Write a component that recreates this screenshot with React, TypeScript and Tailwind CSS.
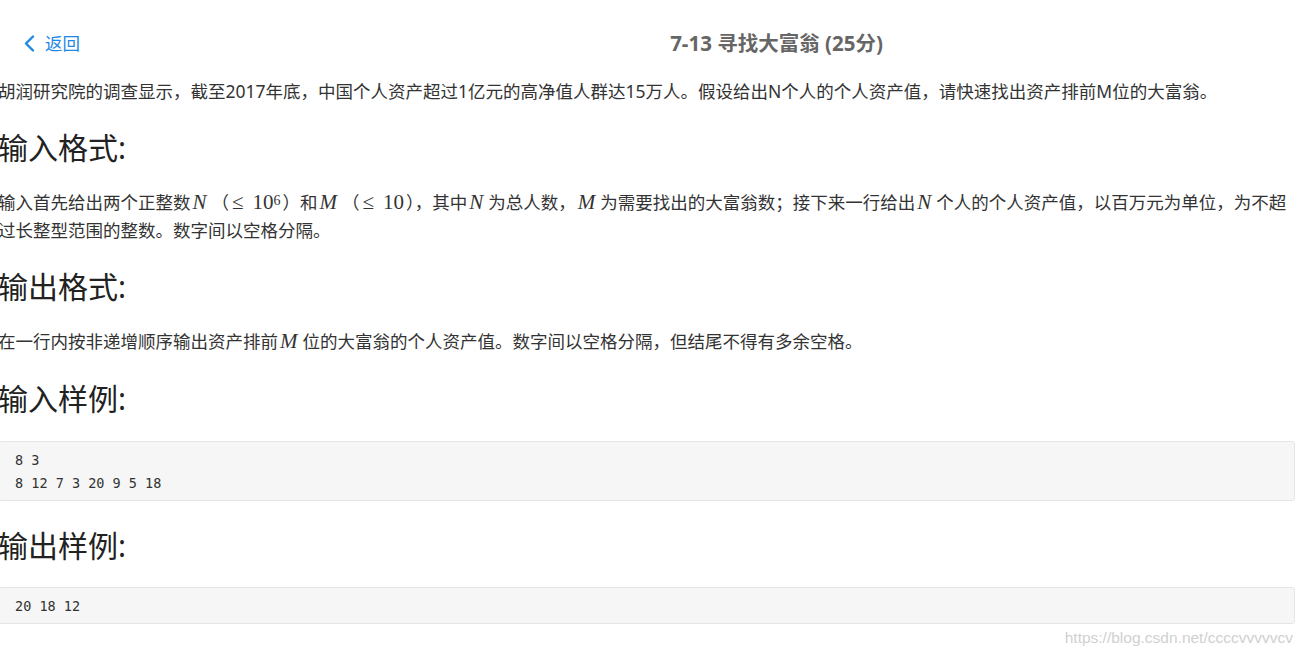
const M = ({ children }: { children: React.ReactNode }) => (
  <span className="italic text-[21px] leading-none font-['Liberation_Serif','DejaVu_Serif',serif] ml-[2px] mr-[5px]">{children}</span>
)

const Le = ({ children }: { children: React.ReactNode }) => (
  <span className="text-[21px] leading-none font-['Liberation_Serif','DejaVu_Serif',serif] pl-[3px] pr-[2px]">
    <span className="mr-[9px]">≤</span>
    {children}
  </span>
)

const Heading = ({ children }: { children: React.ReactNode }) => (
  <h2 className="text-[30px] leading-[40px] text-[#222]">{children}</h2>
)

const Code = ({ lines }: { lines: string[] }) => (
  <pre className="bg-[#f6f6f6] border border-[#e5e5e5] rounded-[3px] pl-[16px] pt-[7px] pb-[5px] text-[13.5px] leading-[23px] text-[#333] font-['DejaVu_Sans_Mono',monospace]">
    {lines.join('\n')}
  </pre>
)

export default function App() {
  return (
    <div className="relative w-[1303px] h-[660px] overflow-hidden bg-white font-['Noto_Sans','Noto_Sans_CJK_SC',sans-serif] text-[#333]">
      <header className="flex items-center pt-[32px] h-[54px]">
        <a className="flex items-center gap-[10px] pl-[24px] text-[#1e88e5] text-[17.5px] leading-[22px] cursor-pointer">
          <svg width="11" height="17" viewBox="0 0 11 17" fill="none" stroke="currentColor" strokeWidth="2.4" strokeLinecap="round" strokeLinejoin="round">
            <polyline points="9,1.5 2,8.5 9,15.5" />
          </svg>
          <span>返回</span>
        </a>
        <div className="flex-1 text-center pl-[170px] text-[20.5px] font-bold text-[#666] leading-[22px]">
          7-13 寻找大富翁 (25分)
        </div>
      </header>

      <main className="-ml-[2px] w-[1297px] text-[17.5px]">
        <p className="mt-[23px] leading-[28px]">
          胡润研究院的调查显示，截至2017年底，中国个人资产超过1亿元的高净值人群达15万人。假设给出N个人的个人资产值，请快速找出资产排前M位的大富翁。
        </p>

        <div className="mt-[23px]">
          <Heading>输入格式:</Heading>
        </div>
        <p className="mt-[20px] leading-[28px]">
          输入首先给出两个正整数<M>N</M>（<Le>10<sup className="text-[14px] relative -top-[4px]">6</sup></Le>）和<M>M</M>（<Le>10</Le>），其中<M>N</M>为总人数，<M>M</M>为需要找出的大富翁数；接下来一行给出<M>N</M>个人的个人资产值，以百万元为单位，为不超过长整型范围的整数。数字间以空格分隔。
        </p>

        <div className="mt-[23px]">
          <Heading>输出格式:</Heading>
        </div>
        <p className="mt-[20px] leading-[28px]">
          在一行内按非递增顺序输出资产排前<M>M</M>位的大富翁的个人资产值。数字间以空格分隔，但结尾不得有多余空格。
        </p>

        <div className="mt-[24px]">
          <Heading>输入样例:</Heading>
        </div>
        <div className="mt-[22px]">
          <Code lines={['8 3', '8 12 7 3 20 9 5 18']} />
        </div>

        <div className="mt-[25px]">
          <Heading>输出样例:</Heading>
        </div>
        <div className="mt-[21px]">
          <Code lines={['20 18 12']} />
        </div>
      </main>

      <div className="absolute right-[10px] bottom-[11px] text-[15.5px] text-[#d0d0d0] font-['Liberation_Sans',sans-serif]">
        https://blog.csdn.net/ccccvvvvvcv
      </div>
    </div>
  )
}
